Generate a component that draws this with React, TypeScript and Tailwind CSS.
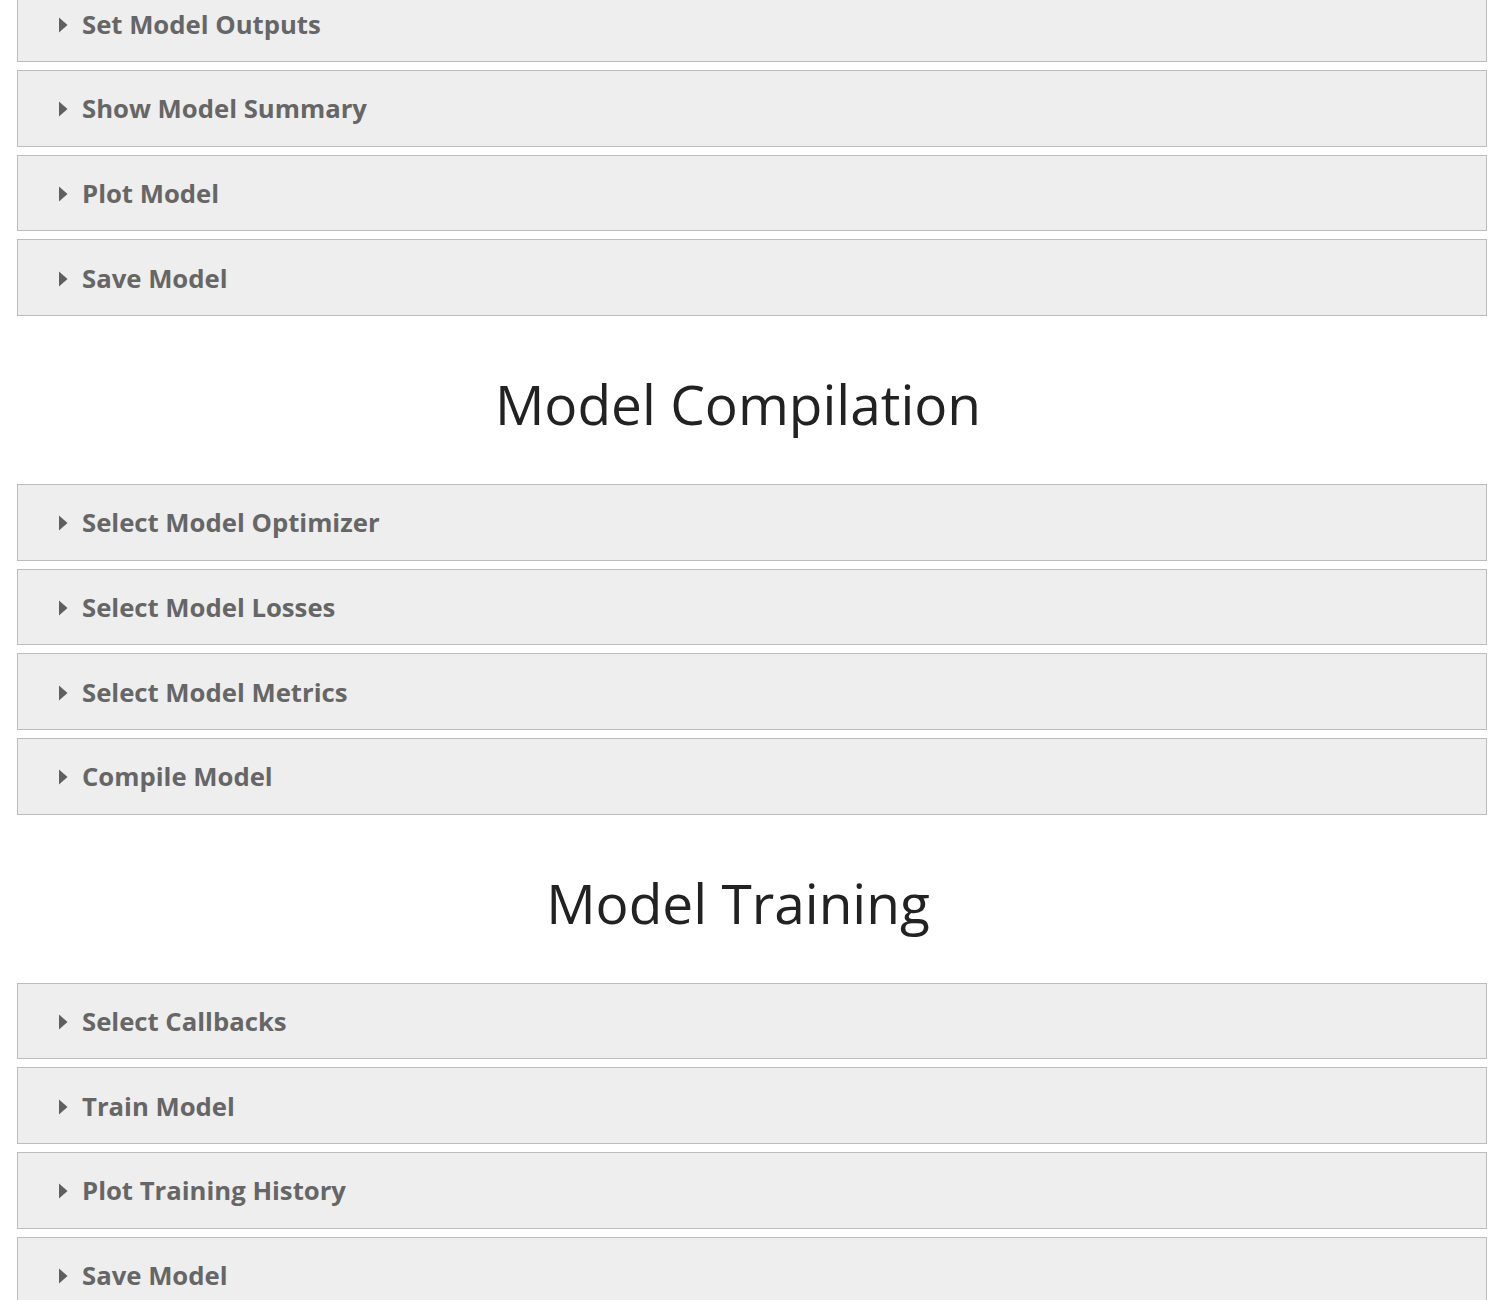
import React from "react";

const sections: { title?: string; items: string[] }[] = [
  { items: ["Set Model Outputs", "Show Model Summary", "Plot Model", "Save Model"] },
  {
    title: "Model Compilation",
    items: ["Select Model Optimizer", "Select Model Losses", "Select Model Metrics", "Compile Model"],
  },
  {
    title: "Model Training",
    items: ["Select Callbacks", "Train Model", "Plot Training History", "Save Model"],
  },
];

function Caret() {
  return (
    <svg width="9" height="16" viewBox="0 0 9 16" className="block shrink-0">
      <polygon points="0,0.5 8.5,8 0,15.5" fill="#5f5f5f" />
    </svg>
  );
}

function Item({ label }: { label: string }) {
  return (
    <div className="mb-[8px] flex h-[76.67px] items-center border border-[#bdbdbd] bg-[#eeeeee] pl-[41px] pt-[2px]">
      <div className="flex items-center gap-[14px]">
        <Caret />
        <span className="text-[25.7px] font-bold leading-none text-[#666666]">{label}</span>
      </div>
    </div>
  );
}

export default function App() {
  return (
    <div
      className="h-[1300px] overflow-hidden bg-white"
      style={{ fontFamily: '"Open Sans", "Noto Sans", sans-serif' }}
    >
      <div className="-mt-[14.67px] pl-[17px]">
        <div className="w-[1470px]">
          {sections.map((s, i) => (
            <div key={i}>
              {s.title && (
                <div className="flex h-[160px] items-center justify-center pr-[28px]">
                  <h2 className="text-[55px] font-normal leading-none text-[#222222]">{s.title}</h2>
                </div>
              )}
              {s.items.map((it, j) => (
                <Item key={j} label={it} />
              ))}
            </div>
          ))}
        </div>
      </div>
    </div>
  );
}
